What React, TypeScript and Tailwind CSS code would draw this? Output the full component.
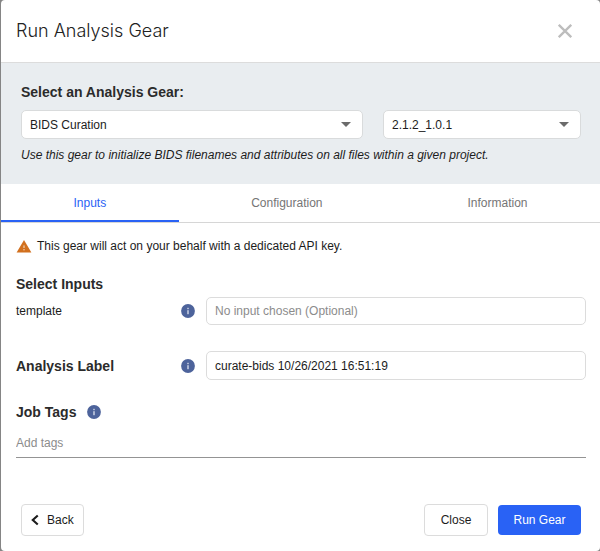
import { useState } from "react";
import type { ReactNode } from "react";

function InfoIcon({ label }: { label: string }) {
  return (
    <svg viewBox="0 0 14 14" className="size-3.5 shrink-0" role="img" aria-label={label}>
      <circle cx="7" cy="7" r="6.9" fill="#4d639b" />
      <rect x="6.2" y="3.8" width="1.6" height="1.4" fill="#c3cbe0" />
      <rect x="6.2" y="6.2" width="1.6" height="4" fill="#c3cbe0" />
    </svg>
  );
}

function WarningIcon() {
  return (
    <svg viewBox="0 0 16 13" className="h-[13px] w-4 shrink-0" aria-hidden="true">
      <path d="M8 0.1 L15.4 12.5 H0.6 Z" fill="#d2701e" />
      <rect x="7.3" y="5.4" width="1.4" height="2.6" fill="#ecc39c" />
      <rect x="7.3" y="9" width="1.4" height="1.4" fill="#ecc39c" />
    </svg>
  );
}

function Select({ label, options }: { label: string; options: string[] }) {
  return (
    <div className="relative">
      <select
        aria-label={label}
        className="block h-[29px] w-full appearance-none rounded-[5px] border border-[#d9dbdc] bg-white pr-8 pl-2 text-xs text-[#1c1c1c]"
      >
        {options.map((o) => (
          <option key={o}>{o}</option>
        ))}
      </select>
      <svg
        viewBox="0 0 10 5"
        className="pointer-events-none absolute top-3 right-3 h-[5px] w-2.5"
        aria-hidden="true"
      >
        <path d="M0 0 H10 L5 5 Z" fill="#6b6b6b" />
      </svg>
    </div>
  );
}

function Heading({ children }: { children: ReactNode }) {
  return <h2 className="text-sm leading-5 font-bold text-[#2b2b2b]">{children}</h2>;
}

const tabs = ["Inputs", "Configuration", "Information"];

export default function App() {
  const [active, setActive] = useState("Inputs");
  const [label, setLabel] = useState("curate-bids 10/26/2021 16:51:19");

  return (
    <div className="min-h-screen bg-[#858585] pl-px font-['Liberation_Sans',Arial,sans-serif] text-xs text-[#1c1c1c]">
      <div role="dialog" aria-labelledby="title" className="flex min-h-screen flex-col rounded bg-white">
        <header className="flex h-[63px] items-center justify-between border-b border-[#dcdcdc] pr-7 pl-[15px]">
          <h1 id="title" className="font-[Inter,sans-serif] text-lg font-light text-[#222]">
            Run Analysis Gear
          </h1>
          <button type="button" aria-label="Close dialog">
            <svg viewBox="0 0 14 14" className="size-3.5" aria-hidden="true">
              <path d="M0.8 0.8 L13.2 13.2 M13.2 0.8 L0.8 13.2" stroke="#bdbdbd" strokeWidth="2.3" />
            </svg>
          </button>
        </header>

        <section className="bg-[#e9edf0] pt-[19px] pr-[19px] pb-[21px] pl-5">
          <Heading>Select an Analysis Gear:</Heading>
          <div className="mt-2 grid grid-cols-[19fr_11fr] gap-5">
            <Select label="Analysis gear" options={["BIDS Curation"]} />
            <Select label="Gear version" options={["2.1.2_1.0.1"]} />
          </div>
          <p className="mt-2 leading-4 italic">
            Use this gear to initialize BIDS filenames and attributes on all files within a given project.
          </p>
        </section>

        <div role="tablist" className="flex h-[39px] border-b border-[#d6d6d6]">
          {tabs.map((t) => (
            <button
              key={t}
              type="button"
              role="tab"
              aria-selected={t === active}
              onClick={() => setActive(t)}
              className={
                t === active
                  ? "flex-auto border-b-2 border-[#2962f5] pt-0.5 text-[#2962f5]"
                  : "flex-auto border-b-2 border-transparent pt-0.5 text-[#757575]"
              }
            >
              {t}
            </button>
          ))}
        </div>

        <main className="pt-[15px] pr-3.5 pl-[15px]">
          <div className="flex items-center gap-[5px] leading-4">
            <WarningIcon />
            <p>This gear will act on your behalf with a dedicated API key.</p>
          </div>

          <div className="mt-5">
            <Heading>Select Inputs</Heading>
          </div>
          <div className="mt-[3px] flex items-center">
            <label htmlFor="template" className="w-[165px] shrink-0">
              template
            </label>
            <InfoIcon label="About template" />
            <input
              id="template"
              placeholder="No input chosen (Optional)"
              className="ml-[11px] h-7 min-w-0 flex-1 rounded-[5px] border border-[#dcdcdc] px-2 placeholder:text-[#8c8c8c]"
            />
          </div>

          <div className="mt-[26px] flex items-center">
            <label
              htmlFor="analysis-label"
              className="w-[165px] shrink-0 text-sm leading-5 font-bold text-[#2b2b2b]"
            >
              Analysis Label
            </label>
            <InfoIcon label="About analysis label" />
            <input
              id="analysis-label"
              value={label}
              onChange={(e) => setLabel(e.target.value)}
              className="ml-[11px] h-[29px] min-w-0 flex-1 rounded-[5px] border border-[#dcdcdc] px-2"
            />
          </div>

          <div className="mt-[22px] flex items-center gap-[11px]">
            <label htmlFor="tags" className="text-sm leading-5 font-bold text-[#2b2b2b]">
              Job Tags
            </label>
            <InfoIcon label="About job tags" />
          </div>
          <input
            id="tags"
            placeholder="Add tags"
            className="mt-1.5 block h-[30px] w-full border-b border-[#949494] placeholder:text-[#8c8c8c]"
          />
        </main>

        <footer className="mt-auto flex items-center pt-5 pr-[19px] pb-[15px] pl-5">
          <button
            type="button"
            className="flex h-8 items-center gap-2 rounded border border-[#dcdcdc] px-[9px]"
          >
            <svg viewBox="0 0 9 12" className="h-3 w-2" aria-hidden="true">
              <path d="M7.6 0.9 L2 6 L7.6 11.1" fill="none" stroke="#1c1c1c" strokeWidth="2.4" />
            </svg>
            Back
          </button>
          <button type="button" className="mr-2.5 ml-auto h-8 min-w-16 rounded border border-[#dcdcdc] px-3">
            Close
          </button>
          <button type="button" className="h-[30px] min-w-[83px] rounded bg-[#2962f5] px-3 text-white">
            Run Gear
          </button>
        </footer>
      </div>
    </div>
  );
}
